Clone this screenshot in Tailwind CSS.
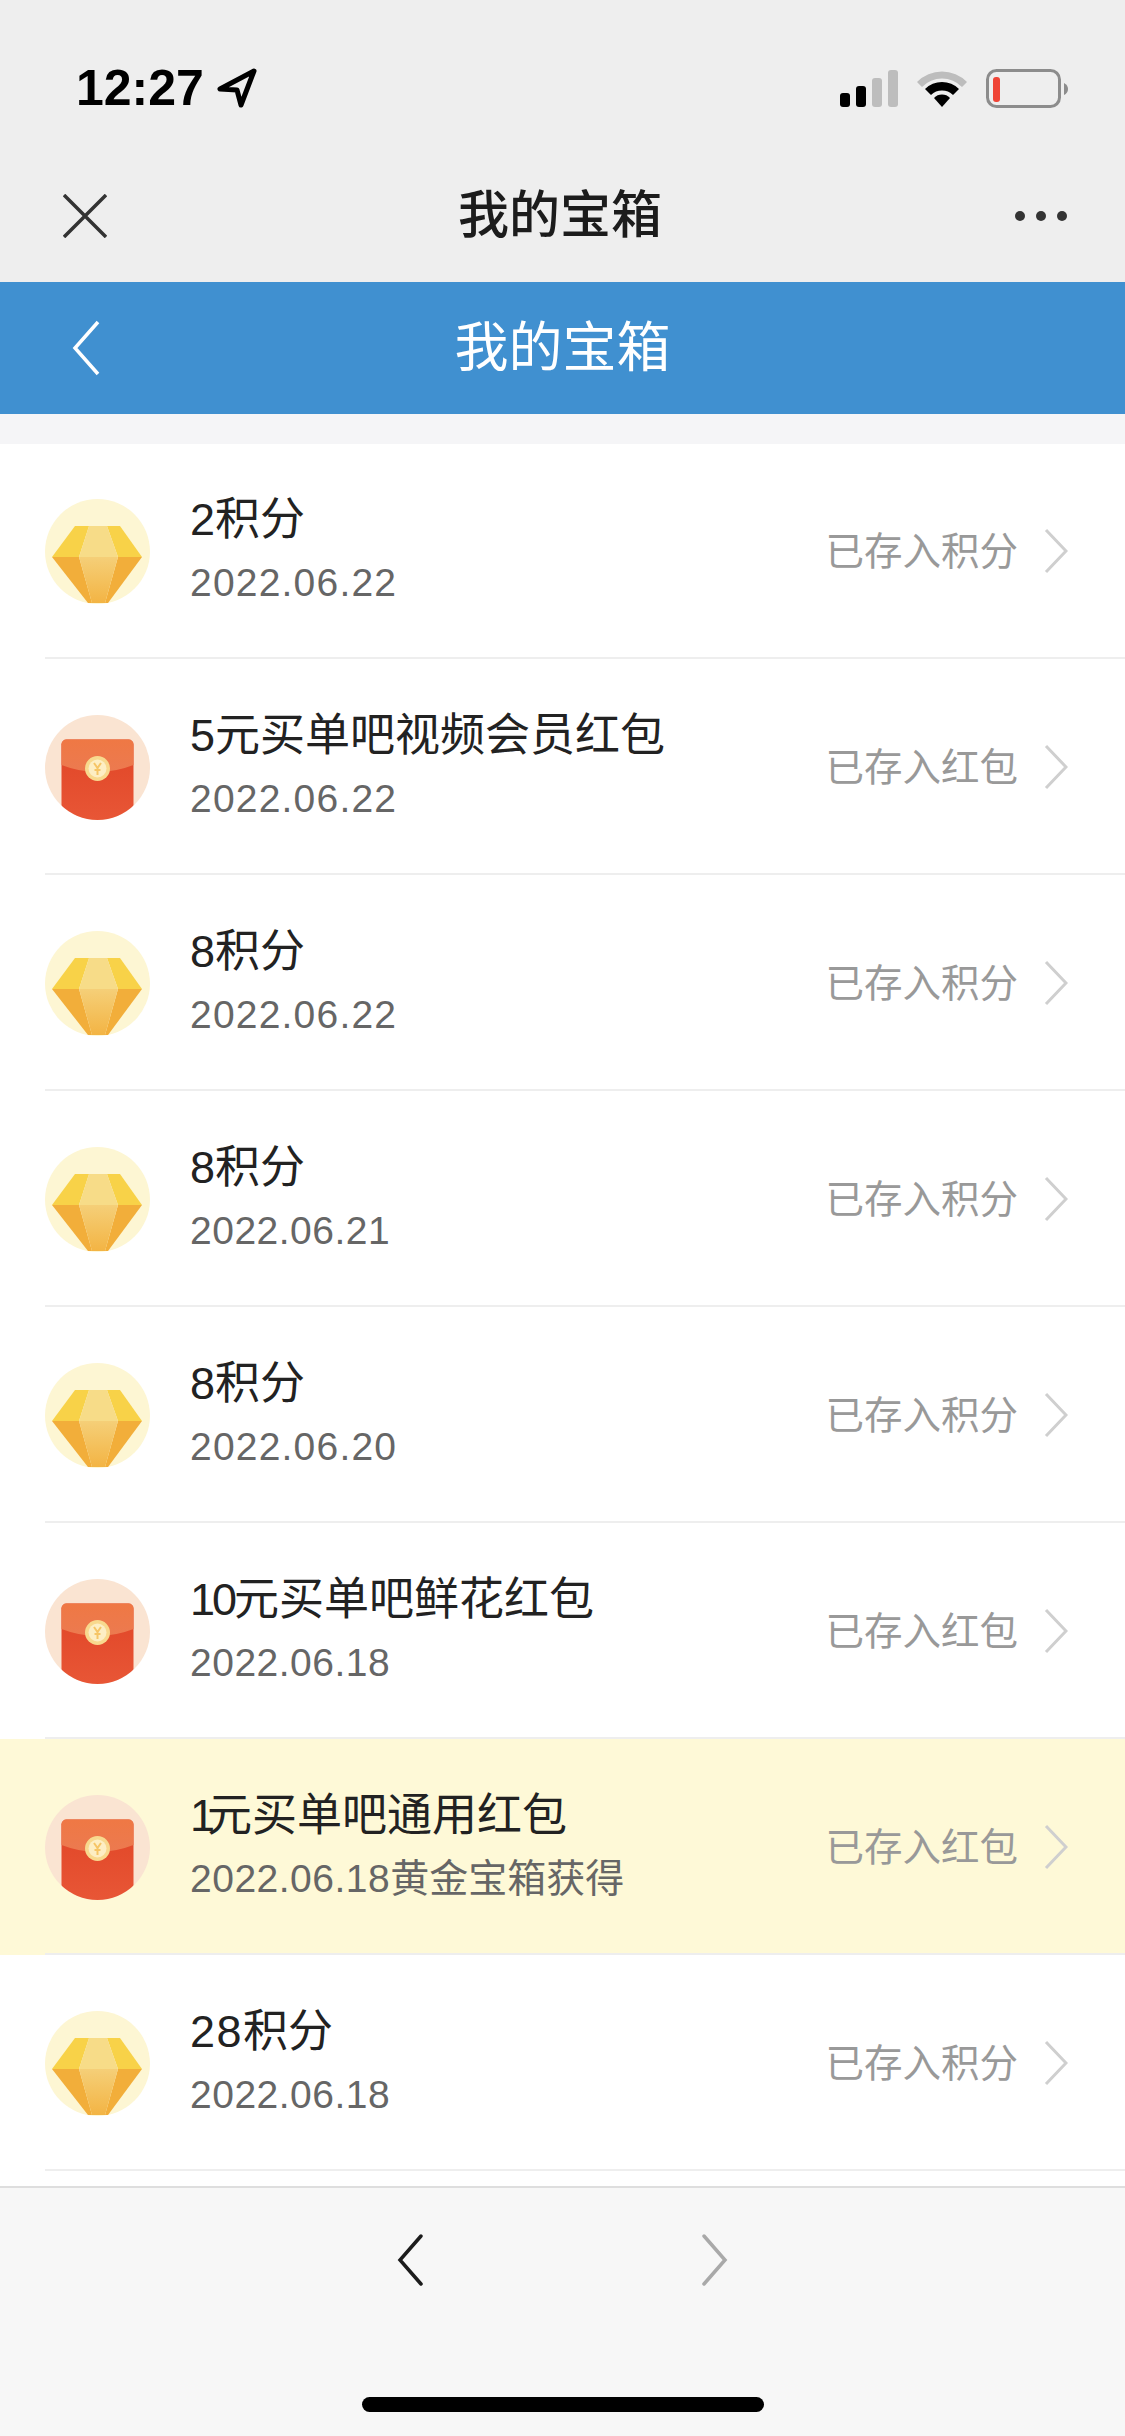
<!doctype html>
<html lang="zh-CN">
	<head>
		<meta charset="UTF-8" />
		<meta name="viewport" content="width=device-width, initial-scale=1.0" />
		<title>我的宝箱</title>
		<script src="https://cdn.jsdelivr.net/npm/@tailwindcss/browser@4"></script>
	</head>
	<body class="w-[1125px] h-[2436px] overflow-hidden bg-white text-[#222] font-['Liberation_Sans','Noto_Sans_CJK_SC',sans-serif]">
		<!-- Shared icons -->
		<svg class="absolute w-0 h-0">
			<defs>
				<clipPath id="circleClip"><circle cx="52.5" cy="52.5" r="52.5" /></clipPath>
				<linearGradient id="gemCenter" x1="0" y1="0" x2="0" y2="1">
					<stop offset="0" stop-color="#f5cf78" />
					<stop offset="1" stop-color="#f3b444" />
				</linearGradient>
				<linearGradient id="envFlap" x1="0" y1="0" x2="0" y2="1">
					<stop offset="0" stop-color="#ef7844" />
					<stop offset="1" stop-color="#ec7a50" />
				</linearGradient>
				<linearGradient id="envBody" x1="0" y1="0" x2="0" y2="1">
					<stop offset="0" stop-color="#e04526" />
					<stop offset="1" stop-color="#e85636" />
				</linearGradient>
				<symbol id="gem" viewBox="0 0 105 105">
					<circle cx="52.5" cy="52.5" r="52.5" fill="#fdf6d3" />
					<polygon points="30,27 44,27 34,58 7,58" fill="#f8d248" />
					<polygon points="62,27 75,27 97,58 73,58" fill="#f8d248" />
					<polygon points="44,27 62,27 73,58 34,58" fill="#f7dc88" />
					<polygon points="7,58 34,58 47,104 43,104" fill="#f2ae3a" />
					<polygon points="73,58 97,58 63,104 60,104" fill="#f2ae3a" />
					<polygon points="34,58 73,58 60,104 47,104" fill="url(#gemCenter)" />
				</symbol>
				<symbol id="envelope" viewBox="0 0 105 105">
					<circle cx="52.5" cy="52.5" r="52.5" fill="#fae4d2" />
					<g clip-path="url(#circleClip)">
						<rect x="16.5" y="24.5" width="72" height="81" rx="5" fill="url(#envBody)" />
						<path d="M16.500 50 V29.500 a5 5 0 0 1 5 -5 H83.500 a5 5 0 0 1 5 5 V50 Q52.500 64 16.500 50 Z" fill="url(#envFlap)" />
					</g>
					<circle cx="52.500" cy="53.500" r="12.500" fill="#f8d98e" />
					<circle cx="52.500" cy="53.500" r="9" fill="#fdeec4" />
					<path d="M49 48 L52.500 53 L56 48 M52.500 53 V60 M49.500 55 H55.500" stroke="#f6c566" stroke-width="2" fill="none" />
				</symbol>
				<symbol id="rowArrow" viewBox="0 0 24 46">
					<path d="M2 2 L22 23 L2 44" stroke="#cfcfcf" stroke-width="3" fill="none" />
				</symbol>
			</defs>
		</svg>

		<!-- Top gray area -->
		<header class="bg-[#eeeeee] h-[282px]">
			<div class="h-[150px] pt-[64px] pl-[76px] pr-[56px] flex items-start justify-between">
				<div class="flex items-center gap-[12px] h-[48px]">
					<span class="text-[50px] leading-[48px] font-bold text-black">12:27</span>
					<svg class="w-[42px] h-[40px]" viewBox="0 0 42 40">
						<path d="M38 3 L4 21 L21 22 L25 37 Z" fill="none" stroke="#000" stroke-width="5" stroke-linejoin="round" />
					</svg>
				</div>
				<div class="flex items-center gap-[18px] h-[50px]">
					<svg class="w-[59px] h-[38px]" viewBox="0 0 59 38">
						<rect x="1" y="23" width="10" height="14" rx="3" fill="#000" />
						<rect x="17" y="16" width="10" height="21" rx="3" fill="#000" />
						<rect x="33" y="8" width="10" height="29" rx="3" fill="#bdbdbd" />
						<rect x="49" y="0" width="10" height="37" rx="3" fill="#bdbdbd" />
					</svg>
					<svg class="w-[52px] h-[38px]" viewBox="0 0 52 38">
						<path d="M1 12 A35 35 0 0 1 51 12 L46 17 A28 28 0 0 0 6 17 Z" fill="#bdbdbd" />
						<path d="M9 19 A24 24 0 0 1 43 19 L37 25 A16 16 0 0 0 15 25 Z" fill="#000" />
						<path d="M18 28 A11 11 0 0 1 34 28 L26 37 Z" fill="#000" />
					</svg>
					<svg class="w-[83px] h-[40px]" viewBox="0 0 83 40">
						<rect x="1.500" y="1.500" width="72" height="36" rx="9" fill="none" stroke="#8c8c8c" stroke-width="3" />
						<rect x="7" y="8" width="7" height="25" rx="3" fill="#ef4436" />
						<path d="M78 14 Q82 16 82 20 Q82 24 78 26 Z" fill="#8c8c8c" />
					</svg>
				</div>
			</div>
			<nav class="h-[132px] pl-[63px] pr-[58px] flex items-center justify-between relative">
				<svg class="w-[44px] h-[44px]" viewBox="0 0 44 44">
					<path d="M1 1 L43 43 M43 1 L1 43" stroke="#333" stroke-width="3.500" fill="none" />
				</svg>
				<h1 class="absolute left-0 right-[5px] text-center text-[51px] leading-[66px] font-medium text-[#1c1c1c]">我的宝箱</h1>
				<div class="flex items-center gap-[11px]">
					<span class="w-[10px] h-[10px] rounded-full bg-[#333]"></span>
					<span class="w-[10px] h-[10px] rounded-full bg-[#333]"></span>
					<span class="w-[10px] h-[10px] rounded-full bg-[#333]"></span>
				</div>
			</nav>
		</header>

		<!-- Blue title bar -->
		<div class="h-[132px] bg-[#4090d0] pl-[72px] flex items-center relative">
			<svg class="w-[28px] h-[56px]" viewBox="0 0 28 56">
				<path d="M26 2 L3 28 L26 54" stroke="#fff" stroke-width="3.500" fill="none" />
			</svg>
			<h2 class="absolute left-0 right-0 text-center text-[54px] leading-[66px] text-white">我的宝箱</h2>
		</div>

		<div class="h-[30px] bg-[#f5f5f7]"></div>

		<!-- List -->
		<main class="h-[1742px] overflow-hidden bg-white">
			<ul class="-mt-[1px]">
				<li class="h-[216px] flex items-center pl-[45px]">
					<svg class="w-[105px] h-[105px] shrink-0"><use href="#gem" /></svg>
					<div class="flex-1 h-full -ml-[105px] pl-[145px] pr-[57px] flex items-center justify-between border-b-2 border-[#eeeeee]">
						<div>
							<p class="text-[45px] leading-[65px]">2积分</p>
							<p class="text-[39px] leading-[61px] text-[#666] tracking-[1.2px]">2022.06.22</p>
						</div>
						<div class="flex items-center gap-[26px]">
							<span class="text-[38.5px] pt-[4px] text-[#999]">已存入积分</span>
							<svg class="w-[24px] h-[46px] mt-[2px]"><use href="#rowArrow" /></svg>
						</div>
					</div>
				</li>
				<li class="h-[216px] flex items-center pl-[45px]">
					<svg class="w-[105px] h-[105px] shrink-0"><use href="#envelope" /></svg>
					<div class="flex-1 h-full -ml-[105px] pl-[145px] pr-[57px] flex items-center justify-between border-b-2 border-[#eeeeee]">
						<div>
							<p class="text-[45px] leading-[65px]">5元买单吧视频会员红包</p>
							<p class="text-[39px] leading-[61px] text-[#666] tracking-[1.2px]">2022.06.22</p>
						</div>
						<div class="flex items-center gap-[26px]">
							<span class="text-[38.5px] pt-[4px] text-[#999]">已存入红包</span>
							<svg class="w-[24px] h-[46px] mt-[2px]"><use href="#rowArrow" /></svg>
						</div>
					</div>
				</li>
				<li class="h-[216px] flex items-center pl-[45px]">
					<svg class="w-[105px] h-[105px] shrink-0"><use href="#gem" /></svg>
					<div class="flex-1 h-full -ml-[105px] pl-[145px] pr-[57px] flex items-center justify-between border-b-2 border-[#eeeeee]">
						<div>
							<p class="text-[45px] leading-[65px]">8积分</p>
							<p class="text-[39px] leading-[61px] text-[#666] tracking-[1.2px]">2022.06.22</p>
						</div>
						<div class="flex items-center gap-[26px]">
							<span class="text-[38.5px] pt-[4px] text-[#999]">已存入积分</span>
							<svg class="w-[24px] h-[46px] mt-[2px]"><use href="#rowArrow" /></svg>
						</div>
					</div>
				</li>
				<li class="h-[216px] flex items-center pl-[45px]">
					<svg class="w-[105px] h-[105px] shrink-0"><use href="#gem" /></svg>
					<div class="flex-1 h-full -ml-[105px] pl-[145px] pr-[57px] flex items-center justify-between border-b-2 border-[#eeeeee]">
						<div>
							<p class="text-[45px] leading-[65px]">8积分</p>
							<p class="text-[39px] leading-[61px] text-[#666] tracking-[0.5px]">2022.06.21</p>
						</div>
						<div class="flex items-center gap-[26px]">
							<span class="text-[38.5px] pt-[4px] text-[#999]">已存入积分</span>
							<svg class="w-[24px] h-[46px] mt-[2px]"><use href="#rowArrow" /></svg>
						</div>
					</div>
				</li>
				<li class="h-[216px] flex items-center pl-[45px]">
					<svg class="w-[105px] h-[105px] shrink-0"><use href="#gem" /></svg>
					<div class="flex-1 h-full -ml-[105px] pl-[145px] pr-[57px] flex items-center justify-between border-b-2 border-[#eeeeee]">
						<div>
							<p class="text-[45px] leading-[65px]">8积分</p>
							<p class="text-[39px] leading-[61px] text-[#666] tracking-[1.2px]">2022.06.20</p>
						</div>
						<div class="flex items-center gap-[26px]">
							<span class="text-[38.5px] pt-[4px] text-[#999]">已存入积分</span>
							<svg class="w-[24px] h-[46px] mt-[2px]"><use href="#rowArrow" /></svg>
						</div>
					</div>
				</li>
				<li class="h-[216px] flex items-center pl-[45px]">
					<svg class="w-[105px] h-[105px] shrink-0"><use href="#envelope" /></svg>
					<div class="flex-1 h-full -ml-[105px] pl-[145px] pr-[57px] flex items-center justify-between border-b-2 border-[#eeeeee]">
						<div>
							<p class="text-[45px] leading-[65px]"><span class="tracking-[-3px]">10</span>元买单吧鲜花红包</p>
							<p class="text-[39px] leading-[61px] text-[#666] tracking-[0.5px]">2022.06.18</p>
						</div>
						<div class="flex items-center gap-[26px]">
							<span class="text-[38.5px] pt-[4px] text-[#999]">已存入红包</span>
							<svg class="w-[24px] h-[46px] mt-[2px]"><use href="#rowArrow" /></svg>
						</div>
					</div>
				</li>
				<!-- Highlighted row -->
				<li class="h-[216px] flex items-center pl-[45px] bg-[#fef9d7]">
					<svg class="w-[105px] h-[105px] shrink-0"><use href="#envelope" /></svg>
					<div class="flex-1 h-full -ml-[105px] pl-[145px] pr-[57px] flex items-center justify-between border-b-2 border-[#eeeeee]">
						<div>
							<p class="text-[45px] leading-[65px]"><span class="tracking-[-8px]">1</span>元买单吧通用红包</p>
							<p class="text-[39px] leading-[61px] text-[#666]"><span class="tracking-[0.5px]">2022.06.18</span>黄金宝箱获得</p>
						</div>
						<div class="flex items-center gap-[26px]">
							<span class="text-[38.5px] pt-[4px] text-[#999]">已存入红包</span>
							<svg class="w-[24px] h-[46px] mt-[2px]"><use href="#rowArrow" /></svg>
						</div>
					</div>
				</li>
				<li class="h-[216px] flex items-center pl-[45px]">
					<svg class="w-[105px] h-[105px] shrink-0"><use href="#gem" /></svg>
					<div class="flex-1 h-full -ml-[105px] pl-[145px] pr-[57px] flex items-center justify-between border-b-2 border-[#eeeeee]">
						<div>
							<p class="text-[45px] leading-[65px]"><span class="tracking-[1.5px]">28</span>积分</p>
							<p class="text-[39px] leading-[61px] text-[#666] tracking-[0.5px]">2022.06.18</p>
						</div>
						<div class="flex items-center gap-[26px]">
							<span class="text-[38.5px] pt-[4px] text-[#999]">已存入积分</span>
							<svg class="w-[24px] h-[46px] mt-[2px]"><use href="#rowArrow" /></svg>
						</div>
					</div>
				</li>
			</ul>
		</main>

		<!-- Bottom toolbar -->
		<footer class="h-[250px] bg-[#f7f7f7] border-t-2 border-[#dedede] flex flex-col items-center">
			<div class="flex items-start gap-[279px] mt-[46px]">
				<svg class="w-[26px] h-[52px]" viewBox="0 0 26 52">
					<path d="M24 2 L3 26 L24 50" stroke="#1c1c1c" stroke-width="3.500" stroke-linecap="round" fill="none" />
				</svg>
				<svg class="w-[26px] h-[52px]" viewBox="0 0 26 52">
					<path d="M2 2 L23 26 L2 50" stroke="#a9a9a9" stroke-width="3.500" stroke-linecap="round" fill="none" />
				</svg>
			</div>
			<div class="w-[402px] h-[15px] rounded-[8px] bg-black mt-[111px]"></div>
		</footer>
	</body>
</html>
